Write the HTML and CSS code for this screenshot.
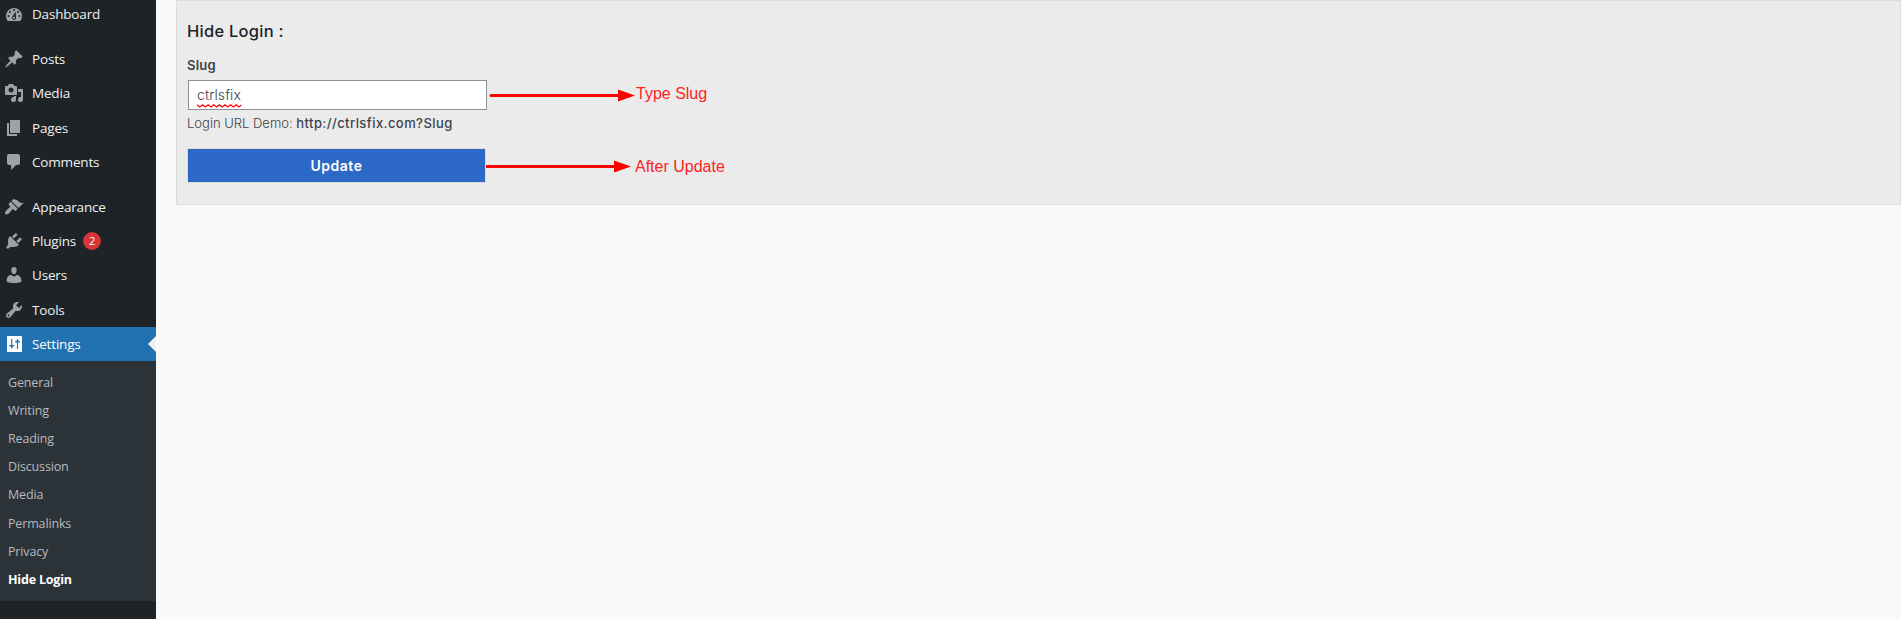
FILE: index.html
```html
<!DOCTYPE html>
<html lang="en">
<head>
<meta charset="utf-8">
<title>Hide Login</title>
<link rel="stylesheet" href="styles.css">
</head>
<body>
<div class="layout">
  <nav class="sidebar">
    <ul class="menu">
      <li class="item"><svg class="icon" viewBox="0 0 20 20"><path fill-rule="evenodd" d="M3.76 17h12.48A8 8 0 1 0 3.76 17zM9 6a1 1 0 1 1 2 0 1 1 0 0 1-2 0zM5 8a1 1 0 1 1 2 0 1 1 0 0 1-2 0zM13 8a1 1 0 1 1 2 0 1 1 0 0 1-2 0zM3.500 12a1 1 0 1 1 2 0 1 1 0 0 1-2 0zM14.500 12a1 1 0 1 1 2 0 1 1 0 0 1-2 0zM11.600 7.300l.3 5.700a2 2 0 1 1-3.200-.7zM10 12.700a1 1 0 1 0 .01 0z"/></svg><span>Dashboard</span></li>
      <li class="item gap"><svg class="icon" viewBox="0 0 20 20"><path d="M10.44 3.02l1.82-1.82 6.36 6.35-1.83 1.82c-1.05-.68-2.48-.57-3.41.36l-.75.75c-.92.93-1.04 2.35-.35 3.41l-1.83 1.82-2.41-2.41-2.8 2.79c-.42.42-3.38 2.71-3.8 2.29s1.86-3.39 2.28-3.81l2.79-2.79L4.1 9.36l1.83-1.82c1.05.69 2.48.57 3.4-.36l.75-.75c.93-.92 1.05-2.35.36-3.41z"/></svg><span>Posts</span></li>
      <li class="item"><svg class="icon" viewBox="0 0 20 20"><path fill-rule="evenodd" d="M13 11V4c0-.55-.45-1-1-1h-1.670L9 1H5L3.670 3H2c-.55 0-1 .45-1 1v7c0 .55.45 1 1 1h10c.55 0 1-.45 1-1zM7 4.500a2.500 2.500 0 1 1 0 5 2.500 2.500 0 0 1 0-5zM14 6h5v10.500a2.500 2.500 0 1 1-2-2.450V9h-3zM10 14.050V13h2v3.500a2.500 2.500 0 1 1-2-2.450z"/></svg><span>Media</span></li>
      <li class="item"><svg class="icon" viewBox="0 0 20 20"><path d="M6 15V2h10v13H6zm-1 1h8v2H3V5h2v11z"/></svg><span>Pages</span></li>
      <li class="item"><svg class="icon" viewBox="0 0 20 20"><path d="M5 2h9c1.1 0 2 .9 2 2v7c0 1.1-.9 2-2 2h-2l-5 5v-5H5c-1.100 0-2-.9-2-2V4c0-1.100.9-2 2-2z"/></svg><span>Comments</span></li>
      <li class="item gap"><svg class="icon" viewBox="0 0 20 20"><path d="M14.48 11.06L7.41 3.99l1.5-1.5c.5-.56 2.3-.47 3.51.32 1.21.8 1.43 1.28 2.91 2.1 1.18.64 2.45 1.26 4.45.85zm-.71.71L6.7 4.7 4.93 6.47c-.39.39-.39 1.02 0 1.41l1.06 1.06c.39.39.39 1.03 0 1.42-.6.6-1.43 1.11-2.21 1.69-.35.26-.7.53-1.01.84C1.43 14.23.4 16.08 1.4 17.07c.99 1 2.84-.03 4.18-1.36.31-.31.58-.66.85-1.02.57-.78 1.08-1.61 1.69-2.21.39-.39 1.02-.39 1.41 0l1.06 1.06c.39.39 1.02.39 1.41 0z"/></svg><span>Appearance</span></li>
      <li class="item"><svg class="icon" viewBox="0 0 20 20"><path d="M13.11 4.36L9.87 7.6 8 5.73l3.24-3.24c.35-.34 1.05-.2 1.56.32.52.51.66 1.21.31 1.55zm-8 1.77l.91-1.12 9.01 9.01-1.19.84c-.71.71-2.63 1.16-3.82 1.16H6.14L4.9 17.26c-.59.59-1.54.59-2.12 0-.59-.58-.59-1.53 0-2.12l1.24-1.24v-3.88c0-1.13.4-3.19 1.09-3.89zm7.26 3.97l3.24-3.24c.34-.35 1.04-.21 1.55.31.52.51.66 1.21.31 1.55l-3.24 3.25z"/></svg><span>Plugins</span><b class="badge">2</b></li>
      <li class="item"><svg class="icon" viewBox="0 0 20 20"><path d="M10 9.25c-2.27 0-2.73-3.44-2.73-3.44C7 4.02 7.82 2 9.97 2c2.16 0 2.98 2.02 2.71 3.81 0 0-.41 3.44-2.68 3.44zm0 2.57L12.72 10c2.39 0 4.52 2.33 4.52 4.53v2.49s-3.65 1.13-7.24 1.13c-3.65 0-7.24-1.13-7.24-1.13v-2.490c0-2.250 1.940-4.480 4.470-4.480z"/></svg><span>Users</span></li>
      <li class="item"><svg class="icon" viewBox="0 0 20 20"><path fill-rule="evenodd" d="M16.68 9.77c-1.34 1.34-3.3 1.67-4.95.99l-5.41 6.52c-.99.99-2.59.99-3.58 0s-.99-2.59 0-3.57l6.52-5.42c-.68-1.65-.35-3.61.99-4.95 1.28-1.28 3.12-1.62 4.72-1.06l-2.89 2.89 2.82 2.82 2.86-2.87c.53 1.58.18 3.39-1.08 4.65zM3.81 16.21c.4.39 1.04.39 1.43 0 .4-.4.4-1.04 0-1.43-.39-.4-1.03-.4-1.43 0-.39.39-.39 1.03 0 1.43z"/></svg><span>Tools</span></li>
      <li class="item current"><svg class="icon" viewBox="0 0 20 20"><path fill-rule="evenodd" d="M3.500 2h14a.5.5 0 0 1 .5.5v15a.5.5 0 0 1-.5.5h-14a.5.5 0 0 1-.5-.5v-15a.5.5 0 0 1 .5-.5zM7.100 5v6H5.300v1.200h1.200L7.700 15l1.300-2.800h1.200V11H8.300V5zM13.500 4.500L12.200 7.200H11v1.200h1.900V15h1.200V8.400H16V7.200h-1.200z"/></svg><span>Settings</span></li>
    </ul>
    <ul class="submenu">
      <li>General</li>
      <li>Writing</li>
      <li>Reading</li>
      <li>Discussion</li>
      <li>Media</li>
      <li>Permalinks</li>
      <li>Privacy</li>
      <li class="active">Hide Login</li>
    </ul>
  </nav>
  <main class="content">
    <section class="panel">
      <h1 class="title">Hide Login :</h1>
      <div class="label">Slug</div>
      <div class="row">
        <div class="field"><span class="typed">ctrlsfix</span><svg class="squiggle" width="45" height="4" viewBox="0 0 45 4"><path d="M0 .8L2.800 3 5.600.8 8.400 3 11.200.8 14 3 16.800.8 19.600 3 22.400.8 25.200 3 28 .8 30.800 3 33.600.8 36.400 3 39.200.8 42 3 44.500.8"/></svg></div>
        <svg class="arrow first" width="146" height="14" viewBox="0 0 146 14"><path class="shaft" d="M2 7.500H130"/><path class="head" d="M129 1.500L146 7.500 129 13.500z"/></svg>
        <span class="note">Type Slug</span>
      </div>
      <div class="hint"><span class="hint-text">Login URL Demo:</span> <strong class="url">http://ctrlsfix.com?Slug</strong></div>
      <div class="row">
        <button class="update">Update</button>
        <svg class="arrow second" width="145" height="14" viewBox="0 0 145 14"><path class="shaft" d="M1 7.500H129"/><path class="head" d="M128 1.500L145 7.500 128 13.500z"/></svg>
        <span class="note after">After Update</span>
      </div>
    </section>
  </main>
</div>
</body>
</html>
```
FILE: styles.css
```css
* { box-sizing: border-box; }
body { margin: 0; background: #f9f9f9; overflow: hidden; }
ul { list-style: none; margin: 0; padding: 0; }
.layout { display: flex; height: 619px; }
.sidebar {
  width: 156px;
  flex: none;
  background: #1d2327;
  font-family: "Open Sans", "Noto Sans", sans-serif;
  color: #f0f0f1;
  overflow: hidden;
}
.menu { margin-top: -3px; font-size: 13.5px; letter-spacing: -0.18px; }
.item { display: flex; align-items: center; height: 34.2px; padding-left: 4px; position: relative; }
.item.gap { margin-top: 11px; }
.icon { width: 20px; height: 20px; margin-right: 8px; fill: #9ca2a7; }
.current { background: #2271b1; color: #fff; }
.current .icon { fill: #fff; }
.current::after {
  content: "";
  position: absolute;
  right: 0;
  top: 9px;
  border: 8px solid transparent;
  border-left: 0;
  border-right-color: #f0f0f1;
}
.badge {
  width: 18px;
  height: 18px;
  margin-left: 7px;
  border-radius: 50%;
  background: #d63638;
  color: #fff;
  font-size: 11px;
  font-weight: 400;
  line-height: 18px;
  text-align: center;
}
.submenu {
  height: 240px;
  padding: 8px 0 0 8px;
  background: #2c3338;
  color: #b8bbbf;
  font-size: 12.5px;
  letter-spacing: -0.15px;
}
.submenu li { height: 28.15px; line-height: 28px; }
.submenu .active { color: #fff; font-weight: 700; letter-spacing: -0.2px; }
.content { flex: 1; padding-left: 20px; }
.panel {
  height: 205px;
  padding: 18px 10px 0;
  background: #ebebeb;
  border: 1px solid #dcdcdc;
  font-family: Inter, sans-serif;
  color: #3c434a;
}
.title { margin: 0; font-size: 16.5px; line-height: 24px; font-weight: 500; letter-spacing: 0.25px; color: #1d2327; }
.label { margin-top: 12px; height: 25px; font-size: 13px; line-height: 20px; font-weight: 600; letter-spacing: 0.25px; }
.row { display: flex; align-items: center; }
.field {
  width: 299px;
  height: 30px;
  margin-left: 1px;
  padding-left: 8px;
  background: #fff;
  border: 1px solid #8c8f94;
  font-size: 14px;
  line-height: 28px;
  position: relative;
}
.typed { font-weight: 300; letter-spacing: 0.1px; }
.squiggle { position: absolute; left: 8px; top: 23px; fill: none; stroke: #f00; stroke-width: 1.1; }
.arrow { flex: none; }
.arrow.first { margin: 0 0 0 2px; }
.arrow.second { margin-top: 1px; }
.shaft { stroke: #f00; stroke-width: 3; stroke-linecap: round; }
.head { fill: #f00; }
.note { color: #f22; font: 16px/20px "Liberation Sans", Arial, sans-serif; margin: -3px 0 0 1px; }
.after { margin: 2px 0 0 4px; }
.hint { margin-top: 3px; height: 35px; font-size: 13px; line-height: 20px; white-space: nowrap; }
.hint-text { font-weight: 300; }
.url { font-weight: 500; letter-spacing: 0.43px; }
.update {
  width: 299px;
  height: 35px;
  padding: 0;
  border: 1px solid #dcdcdc;
  background: #2c68c5;
  color: #fff;
  font: 600 14px/20px Inter, sans-serif;
  letter-spacing: 0.5px;
}
```
